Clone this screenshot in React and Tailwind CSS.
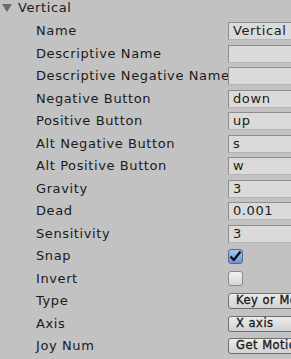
import React from 'react';

const rows = [
  { label: 'Name', kind: 'text', value: 'Vertical' },
  { label: 'Descriptive Name', kind: 'text', value: '' },
  { label: 'Descriptive Negative Name', kind: 'text', value: '' },
  { label: 'Negative Button', kind: 'text', value: 'down' },
  { label: 'Positive Button', kind: 'text', value: 'up' },
  { label: 'Alt Negative Button', kind: 'text', value: 's' },
  { label: 'Alt Positive Button', kind: 'text', value: 'w' },
  { label: 'Gravity', kind: 'text', value: '3' },
  { label: 'Dead', kind: 'text', value: '0.001' },
  { label: 'Sensitivity', kind: 'text', value: '3' },
  { label: 'Snap', kind: 'check', value: true },
  { label: 'Invert', kind: 'check', value: false },
  { label: 'Type', kind: 'popup', value: 'Key or Mouse Button' },
  { label: 'Axis', kind: 'popup', value: 'X axis' },
  { label: 'Joy Num', kind: 'popup', value: 'Get Motion from all Joysticks' },
];

const font = { fontFamily: '"DejaVu Sans", Verdana, sans-serif' };

const Field = ({ row }) => {
  if (row.kind === 'check') {
    return row.value ? (
      <div className="w-[15px] h-[15px] rounded-[3px] border border-[#55698a] bg-gradient-to-b from-[#a9c4ea] to-[#6f97d1] flex items-center justify-center">
        <svg width="13" height="12" viewBox="0 0 13 12">
          <path d="M1.5 6.5 L4.8 10 L11.5 1.5" fill="none" stroke="#111" strokeWidth="2.4" strokeLinejoin="round" />
        </svg>
      </div>
    ) : (
      <div className="w-[15px] h-[15px] rounded-[3px] border border-[#8a8a8a] bg-gradient-to-b from-[#f2f2f2] to-[#d6d6d6]" />
    );
  }
  if (row.kind === 'popup') {
    return (
      <div className="w-[90px] h-[16px] rounded-[3px] border border-[#707070] bg-gradient-to-b from-[#ececec] to-[#d2d2d2] pl-[7px] flex items-center overflow-hidden whitespace-nowrap text-[11.5px] tracking-[0.5px] text-[#1c1c1c] [-webkit-text-stroke:0.35px_#1c1c1c]">
        {row.value}
      </div>
    );
  }
  return (
    <div className="w-[90px] h-[18px] border border-[#8e8e8e] border-b-[#b5b5b5] border-r-[#b5b5b5] bg-[#dadada] pl-[4px] flex items-center text-[13px] tracking-[0.6px] text-[#1a1a1a] whitespace-nowrap">
      {row.value}
    </div>
  );
};

export default function App() {
  return (
    <div className="w-[291px] h-[359px] bg-[#c2c2c2] overflow-hidden" style={font}>
      <div className="h-[19.75px] flex items-start">
        <div className="flex items-center h-[16px] text-[13px] tracking-[0.6px] text-[#1a1a1a]">
          <svg width="10" height="8" viewBox="0 0 10 8" className="ml-[2px] mr-[6px]">
            <polygon points="0,0 10,0 5,8" fill="#6c6c6c" />
          </svg>
          Vertical
        </div>
      </div>
      {rows.map((row) => (
        <div key={row.label} className="h-[22.5px] flex items-center">
          <div className="w-[228px] shrink-0 pl-[36px] overflow-hidden whitespace-nowrap text-[13px] tracking-[0.6px] text-[#1a1a1a]">
            {row.label}
          </div>
          <div className="shrink-0">
            <Field row={row} />
          </div>
        </div>
      ))}
    </div>
  );
}
